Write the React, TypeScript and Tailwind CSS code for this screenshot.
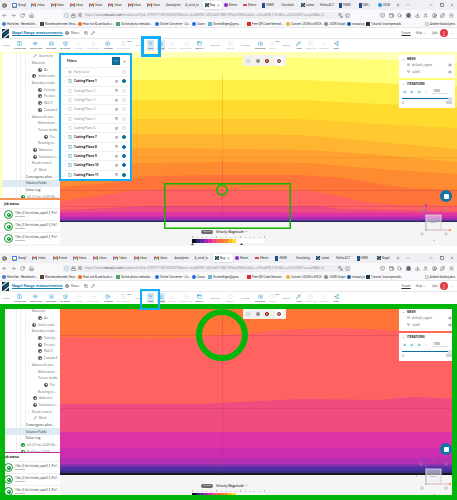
import React from "react";
import {
  ArrowLeft, ArrowRight, RotateCw, Home, Shield, Lock, SlidersHorizontal, Languages, Star, Pocket, Wallet,
  Search, Bug, Download, User, CircleUser, Puzzle, Menu, Plus, ChevronDown, Minus, Square, X, Folder,
  Share2, Copy, Pencil, Globe, Columns2, Wind, Layers, Box, Waves, Move, CirclePlay, Calculator, ListFilter,
  ChartColumn, Crosshair, AppWindow, Camera, Video, Pipette, Image, CloudDownload, Check, Eye, Trash2,
  ChevronRight, Circle, Aperture,
} from "lucide-react";

type Icon = React.ComponentType<{ className?: string; strokeWidth?: number }>;

function Gmail() {
  return (
    <svg viewBox="0 0 8 6" className="h-[4px] w-[5px] shrink-0">
      <path d="M1 6V1" stroke="#4285f4" strokeWidth="1.8" />
      <path d="M7 6V1" stroke="#34a853" strokeWidth="1.8" />
      <path d="M1 1l3 2.4L7 1" fill="none" stroke="#ea4335" strokeWidth="1.8" />
    </svg>
  );
}

function SimLogo({ className }: { className: string }) {
  return (
    <svg viewBox="0 0 16 16" preserveAspectRatio="none" className={className}>
      <rect width="16" height="16" fill="#15303f" />
      <path d="M0 5L9 0h5L0 8zM2 16l14-9v3L7 16z" fill="#d5e4ea" />
      <path d="M3 10L16 2v2L4 11z" fill="#1587c1" />
    </svg>
  );
}

type Tab = [string, string];

const firstTabs: Tab[] = [
  ["g", "Googl"], ["m", "Inbox"], ["m", "Inbox"], ["m", "Inbox"], ["m", "Inbox"], ["m", "Inbox"], ["m", "Inbox"], ["m", "Inbox"],
  ["", "Aanadynev"], ["", "A_wind_tu"], ["s", "Nag"], ["p", "Elenm"], ["r", "Elenm"], ["k", "KNMI"], ["", "Simulatin"],
  ["s", "Latest"], ["", "Kielta ACT"], ["k", "KNMI"], ["k", "SIM ("], ["b", "3D-M"],
];
const secondTabs: Tab[] = [
  ["g", "Googl"], ["m", "Inbox"], ["m", "Kumer"], ["m", "Inbox"], ["m", "Inbox"], ["m", "Inbox"], ["m", "Inbox"], ["m", "Inbox"],
  ["", "Aanadynev"], ["", "A_wind_tu"], ["s", "Nag"], ["p", "Elenm"], ["r", "Elenm"], ["k", "KNMI"], ["", "Simulating"],
  ["s", "Latest"], ["", "Kielta ACT"], ["k", "KNMI"], ["s", "Nagel"],
];

function Favicon({ kind }: { kind: string }) {
  if (kind === "m") return <Gmail />;
  if (kind === "s") return <SimLogo className="size-[4px] shrink-0" />;
  if (kind === "g")
    return (
      <span className="grid size-[5px] shrink-0 place-items-center rounded-[1px] bg-[#3f83ee]">
        <span className="size-[3px] border-b border-[#f6bd2a] bg-white" />
      </span>
    );
  if (kind === "p") return <span className="size-[4px] shrink-0 rounded-full bg-[#8a2bd0]" />;
  if (kind === "r") return <span className="h-[2px] w-[4px] shrink-0 bg-[#e0455c]" />;
  if (kind === "k") return <span className="h-[5px] w-[3px] shrink-0 bg-[#1d4f8f]" />;
  if (kind === "b") return <span className="size-[4px] shrink-0 rounded-full bg-[#1c9ad6]" />;
  return null;
}

function TabStrip({ tabs }: { tabs: Tab[] }) {
  return (
    <div className="flex h-[10px] items-center bg-[#f0f0f4] font-['Roboto',sans-serif] text-[#333]">
      <Aperture className="mx-[2px] size-[5px] shrink-0" strokeWidth={2} />
      <div className="flex w-[386px] shrink-0 pl-px">
        {tabs.map(([kind, label], i) => (
          <button
            key={i}
            className={`flex h-[8px] min-w-0 flex-1 items-center gap-px rounded-[1px] px-[2px] whitespace-nowrap ${i === 10 ? "bg-white shadow-sm" : ""}`}
          >
            <Favicon kind={kind} />
            <span>{label}</span>
            {i === 10 && <X className="ml-px size-[3px] shrink-0" strokeWidth={3} />}
          </button>
        ))}
      </div>
      <div className="flex flex-1 items-center justify-between pr-[3px] pl-px">
        <Plus className="size-[4px]" />
        <ChevronDown className="size-[4px]" />
        <span className="w-[6px]" />
        <Minus className="size-[4px]" />
        <Square className="size-[4px]" strokeWidth={3} />
        <X className="size-[4px]" />
      </div>
    </div>
  );
}

const browserIcons: Icon[] = [Pocket, Wallet, Search, Bug, Download, User, CircleUser, Puzzle, Menu];

function AddressBar({ id }: { id: string }) {
  return (
    <div className="flex h-[10px] items-center bg-[#f9f9fb] text-[#4a4a50]">
      <div className="flex w-[63px] shrink-0 items-center gap-[4px] pl-[2px]">
        {[ArrowLeft, ArrowRight, RotateCw, Home].map((I: Icon, i) => (
          <button key={i} aria-label="Navigate"><I className="size-[5px]" strokeWidth={2} /></button>
        ))}
      </div>
      <div className="flex h-[7px] w-[288px] shrink-0 items-center gap-[2px] rounded-[1px] bg-[#efeff3] px-px">
        <Shield className="size-[5px] shrink-0 text-[#3f9bd0]" />
        <Lock className="size-[5px] shrink-0" />
        <SlidersHorizontal className="size-[4px] shrink-0" />
        <label htmlFor={id} className="flex shrink-0 pl-px text-[#85858c]">
          https://www.<span className="text-[#222]">simscale.com</span>
        </label>
        <input
          id={id}
          className="-ml-[2px] min-w-0 flex-1 bg-transparent text-[#85858c]"
          defaultValue="/workbench/?pid=3730777108199766079&mru=cbe4fd783-7a09-4b07-8867-ff7da22f0b62a8eb=cc7bed878-7c3f-4b5e-a556-2430f1aeaeb98&rt=0"
        />
        <Languages className="size-[5px] shrink-0" />
        <Star className="size-[5px] shrink-0" />
      </div>
      <div className="flex flex-1 items-center justify-between pr-[3px] pl-[29px]">
        {browserIcons.map((I, i) => (
          <button key={i} aria-label="Browser tool"><I className="size-[5px]" strokeWidth={i === 3 ? 4 : 2} /></button>
        ))}
      </div>
    </div>
  );
}

const bookmarks = [
  { w: "w-[38px]", c: "bg-[#3f7fd8] rounded-full", t: "Homilies - Benedictin..." },
  { w: "w-[38px]", c: "bg-[#5a4630]", t: "Klantenstemmen Venu..." },
  { w: "w-[38px]", c: "bg-[#f26a21] rounded-full", t: "How not & use back u..." },
  { w: "w-[39px]", c: "bg-[#58a06a]", t: "Online photo metadat..." },
  { w: "w-[37px]", c: "bg-[#2a70d8] rounded-full", t: "Online Converter - Co..." },
  { w: "w-[16px]", c: "bg-[#1f6fe5] rounded-full", t: "Zoom" },
  { w: "w-[39px]", c: "bg-[#6fb3cf]", t: "OnmesEigen@gma..." },
  { w: "w-[39px]", c: "bg-[#dc2a2a]", t: "Free QR Code Generat..." },
  { w: "w-[38px]", c: "bg-[#e9b23b] rounded-full", t: "Convert JSON to EXCE..." },
  { w: "w-[23px]", c: "bg-[#8b8b8b] rounded-full", t: "JSON Graph" },
  { w: "w-[19px]", c: "bg-[#1c55a0] rounded-full", t: "mosaic.js" },
  { w: "w-[37px]", c: "bg-[#17394b]", t: "Tutorial: Incompressib..." },
];

function Bookmarks() {
  return (
    <div className="flex h-[7px] items-center bg-[#f9f9fb] pl-[2px] font-['Roboto',sans-serif] text-[#333]">
      {bookmarks.map((b) => (
        <a key={b.t} href="#" className={`flex shrink-0 items-center gap-px whitespace-nowrap ${b.w}`}>
          <span className={`size-[4px] shrink-0 ${b.c}`} />
          <span>{b.t}</span>
        </a>
      ))}
      <a href="#" className="ml-auto flex items-center gap-px pr-[2px] whitespace-nowrap">
        <Folder className="size-[4px]" />Andere bladwijzers
      </a>
    </div>
  );
}

function ProjectHeader() {
  return (
    <header className="flex h-[12px] items-center border-y border-[#e8e8ec] bg-white text-[#333]">
      <SimLogo className="ml-[2px] h-[9px] w-[7px]" />
      <a href="#" className="ml-[3px] w-[52px] font-['Roboto',sans-serif] text-[4px] font-bold whitespace-nowrap text-[#1583b5] underline">Nagel flange measurements</a>
      <button className="ml-px flex items-center gap-[2px]"><Globe className="size-[4px]" />Share</button>
      <button aria-label="Copy" className="ml-[5px]"><Copy className="size-[4px]" /></button>
      <button aria-label="Edit" className="ml-[3px]"><Pencil className="size-[4px]" /></button>
      <a href="#" className="ml-auto underline">Forum</a>
      <button className="ml-[5px] flex items-center gap-px">Help<ChevronDown className="size-[3px]" /></button>
      <button className="ml-[6px] flex items-center gap-[2px] pr-[4px]">
        Joke
        <span className="grid size-[8px] place-items-center rounded-full bg-[#e23b46] text-[5px] text-white">J</span>
        <ChevronDown className="size-[3px]" />
      </button>
    </header>
  );
}

type Tool = { w: string; t: string; i?: Icon; on?: boolean; beta?: boolean; hi?: boolean; box?: boolean };
const tools: Tool[] = [
  { w: "w-[12px]", t: "FILTERS" },
  { w: "w-[16px]", t: "Cutting Plane", i: Columns2, on: true },
  { w: "w-[16px]", t: "Particle Trace", i: Wind, on: true },
  { w: "w-[14px]", t: "Iso Surface", i: Layers, on: true },
  { w: "w-[14px]", t: "Iso Volume", i: Box, on: true },
  { w: "w-[13px]", t: "Threshold", i: Waves },
  { w: "w-[16px]", t: "Displacement", i: Move },
  { w: "w-[14px]", t: "Animation", i: CirclePlay, on: true },
  { w: "w-[16px]", t: "Field Calculator", i: Calculator, beta: true },
  { w: "w-[14px]", t: "VIEW" },
  { w: "w-[11px]", t: "Filters", i: ListFilter, on: true, hi: true, box: true },
  { w: "w-[10px]", t: "Legend", i: ChartColumn, on: true, hi: true },
  { w: "w-[13px]", t: "Statistics", i: ChartColumn },
  { w: "w-[14px]", t: "Inspect point", i: Crosshair },
  { w: "w-[13px]", t: "Toggle UI", i: AppWindow, on: true },
  { w: "w-[18px]", t: "COMPARE" },
  { w: "w-[12px]", t: "Compare", i: Columns2 },
  { w: "w-[18px]", t: "CAPTURE" },
  { w: "w-[12px]", t: "Screenshot", i: Camera, on: true },
  { w: "w-[13px]", t: "Record", i: Video, beta: true },
  { w: "w-[15px]", t: "RESULT" },
  { w: "w-[10px]", t: "Probe", i: Pipette, on: true },
  { w: "w-[14px]", t: "Import View", i: Image },
  { w: "w-[12px]", t: "Download", i: CloudDownload },
  { w: "w-[12px]", t: "Share", i: Share2, on: true },
];

function Toolbar({ height, highlight }: { height: string; highlight: string }) {
  return (
    <nav className={`flex bg-white text-[2px] leading-[3px] ${height}`}>
      {tools.map((t, n) => {
        const I = t.i;
        if (!I)
          return (
            <div key={n} className={`flex shrink-0 items-center justify-center text-[#6b7280] ${t.w}`}>{t.t}</div>
          );
        return (
          <div key={n} className={`relative flex shrink-0 justify-center ${t.w}`}>
            <button
              className={`my-px flex flex-col items-center justify-center gap-px px-px whitespace-nowrap ${t.hi ? "bg-[#dcebf3]" : ""} ${t.on ? "text-[#111]" : "text-[#a9adb2]"}`}
            >
              <I className={`size-[5px] ${t.on ? "text-[#1c93c8]" : "text-[#c3c7cb]"}`} strokeWidth={t.on ? 2 : 1} />
              {t.t}
            </button>
            {t.beta && <span className="absolute top-px -right-px text-[#333]">BETA</span>}
            {t.box && <span className={`pointer-events-none absolute z-20 border-[#12aefa] ${highlight}`} />}
          </div>
        );
      })}
    </nav>
  );
}

type Row = { pad: string; t: string; icon?: "gear" | "mesh" | "ok"; caret?: string; sel?: boolean; dark?: boolean };
const treeRows: Row[] = [
  { pad: "pl-[31px]", t: "Geometry", icon: "mesh" },
  { pad: "pl-[26px]", t: "Materials", caret: "−" },
  { pad: "pl-[36px]", t: "Air", icon: "gear" },
  { pad: "pl-[26px]", t: "Initial condi...", icon: "gear", caret: "+" },
  { pad: "pl-[26px]", t: "Boundary condi...", caret: "−" },
  { pad: "pl-[36px]", t: "Velocity...", icon: "gear" },
  { pad: "pl-[36px]", t: "Pressur...", icon: "gear" },
  { pad: "pl-[36px]", t: "Wall 3", icon: "gear" },
  { pad: "pl-[36px]", t: "Custom 4", icon: "gear" },
  { pad: "pl-[26px]", t: "Advanced conc...", caret: "−" },
  { pad: "pl-[36px]", t: "Momentum ..." },
  { pad: "pl-[32px]", t: "Porous media", caret: "−" },
  { pad: "pl-[42px]", t: "Por...", icon: "gear" },
  { pad: "pl-[36px]", t: "Rotating zo..." },
  { pad: "pl-[31px]", t: "Numerics", icon: "gear" },
  { pad: "pl-[31px]", t: "Simulation c...", icon: "gear" },
  { pad: "pl-[26px]", t: "Result control", caret: "+" },
  { pad: "pl-[31px]", t: "Mesh", icon: "mesh" },
  { pad: "pl-[20px]", t: "Convergence plots", caret: "+", dark: true },
  { pad: "pl-[24px]", t: "Solution Fields", sel: true, dark: true },
  { pad: "pl-[24px]", t: "Solver Log", dark: true },
  { pad: "pl-[15px]", t: "p0=0.5 np=0.625 We...", icon: "ok", caret: "+" },
];

function TreeItem({ row }: { row: Row }) {
  return (
    <li className={`relative flex min-h-0 flex-1 items-center gap-[2px] whitespace-nowrap ${row.pad} ${row.sel ? "bg-[#dcebf3]" : ""} ${row.dark ? "text-[#222]" : "text-[#63676c]"}`}>
      {row.caret && <span className="w-[2px] text-[#888]">{row.caret}</span>}
      {row.icon === "gear" && (
        <span className="grid size-[4px] shrink-0 place-items-center rounded-full bg-[#5a6066]"><span className="size-px bg-white" /></span>
      )}
      {row.icon === "mesh" && <Pencil className="size-[4px] shrink-0" strokeWidth={2} />}
      {row.icon === "ok" && (
        <span className="grid size-[4px] shrink-0 place-items-center rounded-full bg-[#119c2c]"><span className="size-px bg-white" /></span>
      )}
      <span>{row.t}</span>
    </li>
  );
}

function Tree({ rows }: { rows: Row[] }) {
  return (
    <div className="relative bg-white">
      <div className="absolute inset-y-0 left-[14px] w-[5px] border-x border-[#f0f0f1]" />
      <div className="absolute inset-y-0 left-[23px] w-px bg-[#f0f0f1]" />
      <ul className="relative flex h-[147px] flex-col">
        {rows.map((r, i) => <TreeItem key={i} row={r} />)}
      </ul>
    </div>
  );
}

function JobStatus() {
  return (
    <section className="bg-white">
      <h2 className="flex h-[8px] items-center pl-[4px] font-bold text-[#222]">Job status</h2>
      {[0, 1, 2].map((i) => (
        <div key={i} className="flex h-[12px] items-center gap-[2px] border-t border-[#eee] pl-[4px] whitespace-nowrap text-[#44494e]">
          <span className="grid size-[9px] shrink-0 place-items-center rounded-full border border-[#129b2e]">
            <span className="grid size-[4px] place-items-center rounded-full bg-[#129b2e]"><span className="size-px bg-white" /></span>
          </span>
          <div>
            <p className="font-['Roboto',sans-serif]">10m_0.3m/m/sec_api=0.3, P=7...</p>
            <p className="text-[2px] leading-[3px]">Simulation</p>
          </div>
        </div>
      ))}
    </section>
  );
}

const planes = [
  ["Cutting Plane 1", true], ["Cutting Plane 2", false], ["Cutting Plane 3", false], ["Cutting Plane 4", false],
  ["Cutting Plane 5", false], ["Cutting Plane 6", false], ["Cutting Plane 7", true], ["Cutting Plane 8", true],
  ["Cutting Plane 9", true], ["Cutting Plane 10", true], ["Cutting Plane 11", true],
] as const;

function FiltersPanel() {
  return (
    <section className="absolute top-px left-[59px] z-10 flex h-[128px] w-[73px] flex-col border-2 border-[#12aefa] bg-white px-[2px]">
      <div className="flex h-[12px] shrink-0 items-center pl-[4px] text-[#222]">
        <h2 className="font-bold">Filters</h2>
        <button aria-label="Apply" className="ml-auto grid h-[8px] w-[8px] place-items-center bg-[#0f6c9e] text-white">
          <Check className="size-[4px]" strokeWidth={3} />
        </button>
        <button aria-label="Add filter" className="grid h-[8px] w-[8px] place-items-center"><Plus className="size-[3px]" /></button>
      </div>
      {([["Parts Color", false], ...planes] as [string, boolean][]).map(([name, on], i) => (
        <label
          key={name}
          className={`flex min-h-0 flex-1 items-center gap-[2px] border-t border-[#f0f0f1] pl-px whitespace-nowrap ${on ? "font-bold text-[#111]" : "text-[#777b80]"}`}
        >
          <ChevronRight className="size-[2px]" />
          {i === 0 ? <Eye className="size-[4px] text-[#888]" /> : <Columns2 className={`size-[4px] ${on ? "text-[#1786b8]" : "text-[#b3c6d0]"}`} strokeWidth={2} />}
          <span className="flex-1">{name}</span>
          {i > 0 && <Trash2 className="size-[3px] text-[#55595e]" />}
          <input
            type="checkbox"
            defaultChecked={on}
            className="mr-[2px] ml-[2px] size-[4px] appearance-none rounded-full border border-[#d9dcdf] bg-white checked:border-[#0b6fa5] checked:bg-[#0b6fa5]"
          />
        </label>
      ))}
    </section>
  );
}

function RenderModes({ top }: { top: string }) {
  return (
    <div className={`absolute left-[243px] flex h-[11px] w-[43px] items-center justify-around rounded-[1px] bg-[#f2f1ee] ${top}`}>
      <button aria-label="Wireframe"><Circle className="size-[4px] text-[#888]" /></button>
      <button aria-label="Surface"><Circle className="size-[4px] fill-[#999] text-[#555]" /></button>
      <button aria-label="Shaded"><Circle className="size-[4px] fill-[#e2632c] text-[#5a1a10]" strokeWidth={4} /></button>
      <button aria-label="Field" className="bg-white p-[2px]"><Circle className="size-[4px] fill-[#e8795a] text-[#443355]" strokeWidth={4} /></button>
    </div>
  );
}

function SidePanels({ top, id }: { top: string; id: string }) {
  return (
    <div className={`absolute right-[2px] flex w-[56px] flex-col gap-[2px] text-[#55595e] ${top}`}>
      <section className="h-[23px] bg-white px-[3px] pt-[2px]">
        <h3 className="flex items-center gap-[2px] font-bold text-[#222]"><ChevronDown className="size-[3px]" />MESH</h3>
        {["default_region", "solid1"].map((n) => (
          <div key={n} className="flex h-[7px] items-center gap-[2px] pl-[5px]">
            <Box className="size-[3px]" /><span className="flex-1">{n}</span><Eye className="size-[4px]" />
          </div>
        ))}
      </section>
      <section className="h-[28px] bg-white px-[3px] pt-[2px]">
        <h3 className="flex items-center gap-[2px] font-bold text-[#222]"><ChevronDown className="size-[3px]" />ITERATIONS</h3>
        <div className="mt-[3px] flex items-center gap-[3px] pl-px text-[#1786b8]">
          <button aria-label="First"><ArrowLeft className="size-[4px]" strokeWidth={3} /></button>
          <button aria-label="Previous"><ArrowLeft className="size-[4px]" strokeWidth={3} /></button>
          <button aria-label="Next"><ArrowRight className="size-[4px]" strokeWidth={3} /></button>
          <button aria-label="Last"><ArrowRight className="size-[4px] text-[#c5c9cc]" /></button>
          <input aria-label="Iteration" id={id} defaultValue="1000" className="ml-px h-[5px] w-[16px] border-b border-[#ddd] pl-px text-[#222]" />
        </div>
        <input
          type="range"
          aria-label="Iteration slider"
          min={0}
          max={1000}
          defaultValue={1000}
          className="mt-[4px] block h-px w-full appearance-none bg-[#0b6fa5] [&::-webkit-slider-thumb]:size-[4px] [&::-webkit-slider-thumb]:appearance-none [&::-webkit-slider-thumb]:rounded-full [&::-webkit-slider-thumb]:border [&::-webkit-slider-thumb]:border-[#b9cfda] [&::-webkit-slider-thumb]:bg-white"
        />
        <div className="mt-[2px] flex justify-between"><span>0</span><span>1000</span></div>
      </section>
    </div>
  );
}

function Legend({ top }: { top: string }) {
  return (
    <div className={`absolute left-[192px] w-[73px] ${top}`}>
      <div className="flex h-[5px] items-center pl-[9px]">
        <span className="grid h-[4px] w-[12px] place-items-center rounded-full bg-[#66696d] text-[2px] leading-[3px] text-white">unit m/s</span>
        <span className="ml-[3px] font-semibold whitespace-nowrap text-[#333]">Velocity Magnitude</span>
        <ChevronDown className="ml-px size-[3px]" />
      </div>
      <div className="mt-px flex h-[3px] items-end justify-between">
        {Array.from({ length: 16 }, (_, i) => (
          <span key={i} className={`w-px bg-[#bbb] ${i % 5 === 0 ? "h-[2px]" : "h-px"}`} />
        ))}
      </div>
      <div className="mt-px flex h-[4px] bg-white">
        {["bg-[#0c0c24]", "bg-[#2c2b78]", "bg-[#6527a4]", "bg-[#a12bb0]", "bg-[#d22fa9]", "bg-[#ee4b80]", "bg-[#ff6060]", "bg-[#ff7438]", "bg-[#ff8b30]", "bg-[#ffb52f]", "bg-[#ffdb30]"].map((c) => (
          <span key={c} className={`w-[4px] ${c}`} />
        ))}
      </div>
      <div className="flex">
        <svg viewBox="0 0 4 2" className="-ml-px h-[2px] w-[3px]"><path d="M2 0l2 2H0z" /></svg>
        <svg viewBox="0 0 4 2" className="ml-[46px] h-[2px] w-[3px]"><path d="M2 0l2 2H0z" /></svg>
      </div>
    </div>
  );
}

function ViewCube({ top }: { top: string }) {
  return (
    <svg viewBox="0 0 40 40" className={`absolute right-[1px] size-[40px] ${top}`} fill="none">
      <path d="M10 28V4" stroke="#8457e8" strokeWidth=".7" />
      <path d="M10 28h24" stroke="#f49a8c" strokeWidth=".7" />
      <rect x="9" y="27" width="2" height="2" fill="#67d68c" />
      <circle cx="10" cy="3" r="1" fill="#8b3ed0" />
      <circle cx="34" cy="28" r="1" fill="#f4743b" />
      <rect x="10" y="13" width="15" height="15" fill="#eeeef2" fillOpacity=".55" stroke="#cfcfd4" />
      <text x="14" y="21" fontSize="2" fill="#888">FRONT</text>
      <g stroke="#999" strokeWidth=".5">
        <path d="M17 3l1-1 1 1M17 38l1 1 1-1M1 19l-1 1 1 1M35 19l1 1-1 1" />
        <circle cx="5" cy="8" r="1.3" /><circle cx="30" cy="8" r="1.3" />
        <circle cx="6" cy="32" r="1.3" /><circle cx="30" cy="32" r="1.3" />
      </g>
    </svg>
  );
}

function ChatButton({ top }: { top: string }) {
  return (
    <button aria-label="Chat" className={`absolute right-[5px] z-10 grid size-[12px] place-items-center rounded-full bg-[#0c76a8] ${top}`}>
      <span className="size-[5px] rounded-[1px] bg-white" />
    </button>
  );
}

// Each band fills from its upper edge down to the bottom of the view.
type Band = { fill: string; edge: string };
const wideBands: Band[] = [
  { fill: "#ffffb8", edge: "0,52 457,52" },
  { fill: "#ffff78", edge: "0,59 140,58 240,57 310,58 390,60 457,63" },
  { fill: "#ffee44", edge: "0,82 140,80 300,80 380,83 457,86" },
  { fill: "#ffdb30", edge: "0,102 140,100 300,100 380,104 457,107" },
  { fill: "#ffc92f", edge: "0,121 140,119 300,119 380,124 457,128" },
  { fill: "#ffb52f", edge: "0,134 140,134 300,135 370,141 400,144 457,149" },
  { fill: "#ffa030", edge: "0,153 140,148 240,149 310,150 380,155 457,162" },
  { fill: "#ff8b30", edge: "0,168 140,163 220,162 310,163 380,169 457,174" },
  { fill: "#ff7438", edge: "0,190 100,184 150,176 220,175 300,175 345,178 380,184 410,188 457,190" },
  { fill: "#ff6260", edge: "0,202 60,201 90,197 130,191 180,189 240,190 310,191 345,197 365,202 400,205 457,206" },
  { fill: "#ee4b80", edge: "0,210 60,210 110,208 150,206 320,206 340,209 457,211" },
  { fill: "#dd33a5", edge: "0,213 140,212 457,213" },
  { fill: "#c62db0", edge: "0,216 457,216" },
  { fill: "#9a2fb0", edge: "0,218 457,218" },
  { fill: "#5530a5", edge: "0,220 457,220" },
  { fill: "#26263e", edge: "0,221 457,221" },
  { fill: "#f5f5f5", edge: "0,222 457,222" },
];
const closeBands: Band[] = [
  { fill: "#ff7538", edge: "0,304 457,304" },
  { fill: "#ff6260", edge: "0,336 60,337 110,338 150,339 200,337 240,334 280,330 330,328 370,329 400,331 457,332" },
  { fill: "#f04c80", edge: "0,404 200,404 240,402 300,399 380,400 413,397 457,399" },
  { fill: "#dd33a5", edge: "0,432 457,432" },
  { fill: "#cc2db0", edge: "0,448 457,448" },
  { fill: "#b52fb2", edge: "0,458 457,458" },
  { fill: "#8f33ad", edge: "0,464 457,464" },
  { fill: "#5f30a6", edge: "0,466 457,466" },
  { fill: "#4a2fa6", edge: "0,468 457,468" },
  { fill: "#362f78", edge: "0,471 457,471" },
  { fill: "#1c1820", edge: "0,473 457,473" },
  { fill: "#f5f5f5", edge: "0,475 457,475" },
];

function Contours({ bands, box, lines, faint }: { bands: Band[]; box: string; lines: string; faint: string }) {
  return (
    <svg viewBox={box} preserveAspectRatio="none" className="absolute inset-0 size-full">
      {bands.map((b, i) => <polygon key={i} fill={b.fill} points={`${b.edge} 457,500 0,500`} />)}
      <path d={lines} stroke="#a03060" strokeOpacity=".25" strokeWidth="1" />
      <path d={faint} stroke="#e08020" strokeOpacity=".3" strokeWidth="1" />
    </svg>
  );
}

export default function App() {
  return (
    <main className="w-full overflow-hidden bg-white font-['Open_Sans',sans-serif] text-[3px] leading-[4px]">
      <section>
        <TabStrip tabs={firstTabs} />
        <AddressBar id="address-first" />
        <Bookmarks />
        <ProjectHeader />
        <Toolbar height="h-[13px]" highlight="-top-[3px] -bottom-[5px] -left-[4px] -right-[5px] border-3" />
        <div className="relative h-[194px] overflow-hidden">
          <Contours bands={wideBands} box="0 52 457 194" lines="M222.5 160V221M60 190.5H457M60 206.5H457" faint="M222.5 75V160M132 157.5H457" />
          <aside className="relative w-[60px] pt-px">
            <div className="h-[145px] overflow-hidden border-l-2 border-[#ffffb8]"><Tree rows={treeRows} /></div>
            <div className="h-[2px] bg-[#ff9257]" />
            <JobStatus />
          </aside>
          <FiltersPanel />
          <RenderModes top="top-[3px]" />
          <SidePanels top="top-[3px]" id="iteration-first" />
          <div className="absolute top-[131px] left-[164px] h-[46px] w-[127px] border border-[#12b400] outline-1 -outline-offset-2 outline-[#12b40088]" />
          <div className="absolute top-[132px] left-[216px] size-[12px] rounded-full border-2 border-[#2db310]" />
          <Legend top="top-[177px]" />
          <ViewCube top="top-[150px]" />
          <ChatButton top="top-[138px]" />
        </div>
      </section>

      <section className="mt-[7px]">
        <TabStrip tabs={secondTabs} />
        <AddressBar id="address-second" />
        <Bookmarks />
        <ProjectHeader />
        <Toolbar height="h-[12px]" highlight="-top-[3px] -bottom-[6px] -left-[5px] -right-[4px] border-2" />
        <div className="relative h-[196px] overflow-hidden">
          <Contours bands={closeBands} box="0 304 457 196" lines="M222.5 309V474M60 335.5H457M60 408.5H457" faint="" />
          <aside className="relative w-[60px] pt-[4px]">
            <div className="h-[144px] overflow-hidden bg-white pl-[2px]">
              <Tree rows={[...treeRows.slice(1), { pad: "pl-[19px]", t: "Run(3) np=0.625", icon: "ok" }]} />
            </div>
            <div className="h-px bg-[#c02f9c]" />
            <JobStatus />
          </aside>
          <RenderModes top="top-[4px]" />
          <SidePanels top="top-[4px]" id="iteration-second" />
          <Legend top="top-[179px]" />
          <ViewCube top="top-[152px]" />
          <ChatButton top="top-[139px]" />
          <div className="pointer-events-none absolute inset-0 border-5 border-[#00b60a]" />
          <div className="absolute top-[5px] left-[196px] size-[52px] rounded-full border-6 border-[#00b60a]" />
        </div>
      </section>
    </main>
  );
}
